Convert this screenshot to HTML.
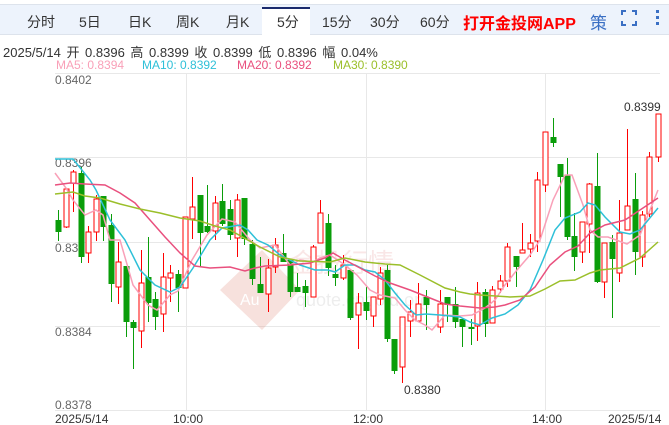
<!DOCTYPE html>
<html><head><meta charset="utf-8"><style>
body{margin:0;width:669px;height:425px;overflow:hidden;background:#fff;font-family:"Liberation Sans","Noto Sans CJK SC",sans-serif;}
.bar{position:absolute;left:0;top:4px;width:669px;height:31px;background:#edf3fc;border-top:1px solid #dde3ec;border-bottom:1px solid #dde3ec;box-sizing:border-box}
.t{position:absolute;top:12px;font-size:14px;color:#333}
.act{position:absolute;left:262px;top:7px;width:48px;height:29px;background:#fff;border-top:2px solid #1a2a6c;box-sizing:border-box}
.info{position:absolute;left:3px;top:42px;font-size:13px;color:#333;word-spacing:2px}
.ma{position:absolute;top:58px;font-size:12px}
</style></head><body>
<div class="bar"></div>
<div class="act"></div>
<span class="t" style="left:27px">分时</span>
<span class="t" style="left:79px">5日</span>
<span class="t" style="left:128px">日K</span>
<span class="t" style="left:176px">周K</span>
<span class="t" style="left:226px">月K</span>
<span class="t" style="left:277px">5分</span>
<span class="t" style="left:322px">15分</span>
<span class="t" style="left:370px">30分</span>
<span class="t" style="left:420px">60分</span>
<span class="t" style="left:463px;top:10px;font-size:16px;font-weight:bold;color:#f00">打开金投网APP</span>
<span class="t" style="left:590px;top:9px;font-size:17px;color:#3a6fc4">策</span>
<svg style="position:absolute;left:620px;top:9px" width="49" height="20"><g stroke="#3a6fc4" stroke-width="2" fill="none"><path d="M2 6V2H6M12 2H16V6M16 12V16H12M6 16H2V12"/></g><g fill="#3a6fc4"><rect x="36" y="1" width="3" height="3"/><rect x="36" y="7" width="3" height="3"/><rect x="36" y="13" width="3" height="3"/></g></svg>
<div class="info">2025/5/14 开 0.8396 高 0.8399 收 0.8399 低 0.8396 幅 0.04%</div>
<span class="ma" style="left:56px;color:#f9a0b8">MA5: 0.8394</span>
<span class="ma" style="left:142px;color:#2ec0d8">MA10: 0.8392</span>
<span class="ma" style="left:237px;color:#e9507e">MA20: 0.8392</span>
<span class="ma" style="left:333px;color:#9bbf2a">MA30: 0.8390</span>
<svg id="c" style="position:absolute;left:0;top:0" width="669" height="425" font-family="Liberation Sans, sans-serif">
<g stroke="#e8e8e8" stroke-width="1">
<line x1="55" y1="73.5" x2="660" y2="73.5"/><line x1="55" y1="157.5" x2="660" y2="157.5"/><line x1="55" y1="242.5" x2="660" y2="242.5"/><line x1="55" y1="326.5" x2="660" y2="326.5"/><line x1="55" y1="410.5" x2="660" y2="410.5"/>
<line x1="186.5" y1="73" x2="186.5" y2="411"/><line x1="366.5" y1="73" x2="366.5" y2="411"/><line x1="545.5" y1="73" x2="545.5" y2="411"/>
</g>
<g opacity="0.25"><path d="M220 290 L262 250 L300 290 L262 330Z" fill="#e08a7a"/><text x="240" y="305" font-size="16" fill="#fff">Au</text><text x="290" y="272" font-size="26" fill="#e9a0a0" font-family="Noto Sans CJK SC">金投行情</text><text x="296" y="306" font-size="18" fill="#bbb">quote.cngold.org</text></g>
<g font-size="12" fill="#666"><text x="55" y="84">0.8402</text><text x="55" y="167">0.8396</text><text x="55" y="252">0.839</text><text x="55" y="336">0.8384</text><text x="55" y="409">0.8378</text></g>
<g font-size="12" fill="#333"><text x="55" y="423">2025/5/14</text><text x="173" y="423">10:00</text><text x="353" y="423">12:00</text><text x="532" y="423">14:00</text><text x="608" y="423">2025/5/14</text><text x="624" y="111">0.8399</text><text x="404" y="394">0.8380</text></g>
<g id="k"></g><g id="m" fill="none" stroke-width="1.5"></g>
</svg>
<script>
var K=[[58,220,232,210,241,0],[66,189,227,188,228,1],[73,172,183,170,212,1],[81,173,257,167,263,0],[88,232,253,226,263,1],[96,199,232,195,241,1],[103,196,227,196,241,0],[111,225,284,214,302,0],[118,262,287,242,304,1],[126,266,322,266,337,0],[133,322,328,320,369,0],[141,283,331,250,348,1],[148,277,303,237,322,0],[155,299,317,292,330,0],[163,277,314,253,332,1],[170,273,278,265,302,1],[178,274,288,270,312,0],[185,217,288,217,288,1],[192,207,219,177,239,1],[200,195,233,195,266,0],[207,226,232,185,233,0],[215,203,231,196,240,1],[222,201,224,184,226,0],[230,209,235,200,240,0],[237,200,238,194,257,1],[244,198,239,198,245,0],[252,244,279,240,285,0],[260,284,293,257,293,0],[268,268,294,259,312,1],[275,245,267,238,273,1],[283,253,262,234,262,0],[290,260,292,260,297,0],[297,287,292,273,292,0],[305,286,293,280,307,0],[313,247,297,245,297,1],[320,213,243,200,243,1],[328,223,268,214,276,0],[335,274,278,265,286,0],[343,265,278,255,280,1],[350,270,318,270,320,0],[358,303,315,293,349,1],[366,302,311,287,320,0],[373,297,316,297,327,1],[380,273,299,267,305,1],[387,270,339,265,342,0],[394,339,371,339,374,0],[402,317,367,317,383,1],[410,312,321,300,337,1],[418,304,321,283,321,1],[426,297,305,290,330,0],[440,304,327,290,333,1],[447,297,305,297,322,0],[455,304,322,287,328,0],[462,319,327,319,347,0],[471,327,329,319,345,0],[477,293,326,282,341,1],[485,292,324,289,337,0],[492,290,323,286,323,1],[500,281,289,275,293,1],[507,247,281,243,287,1],[516,256,267,256,287,0],[522,250,253,223,253,1],[530,243,249,234,257,1],[537,180,241,172,252,1],[545,132,185,132,192,1],[553,137,143,118,147,0],[560,164,177,164,217,0],[567,175,237,158,240,0],[574,236,257,213,271,0],[582,222,252,222,263,1],[589,184,224,183,253,1],[597,186,282,153,283,0],[604,243,282,243,298,1],[612,242,259,235,318,0],[619,233,273,200,282,1],[627,206,230,129,230,1],[635,199,252,173,275,0],[642,215,257,211,267,1],[649,157,214,152,217,1],[658,114,157,114,162,1]];
var s='';K.forEach(function(c){var x=c[0],col=c[5]?'#f00':'#0a9d0a';s+='<line x1="'+(x+.5)+'" x2="'+(x+.5)+'" y1="'+c[3]+'" y2="'+c[4]+'" stroke="'+col+'"/>';
if(c[5])s+='<rect x="'+(x-2)+'" y="'+c[1]+'" width="5" height="'+Math.max(1,c[2]-c[1])+'" fill="#fff" stroke="#f00"/>';else s+='<rect x="'+(x-2.5)+'" y="'+c[1]+'" width="6" height="'+Math.max(2,c[2]-c[1])+'" fill="#0a9d0a"/>';});
document.getElementById('k').innerHTML=s;
var M=[['#f9a0b8','55,173 66,188 73,200 85,215 96,210 103,215 110,240 120,240 133,285 148,305 157,310 170,295 178,291 192,260 207,235 222,219 235,222 250,240 260,248 275,245 290,265 300,260 313,262 320,258 330,255 345,265 357,275 370,290 380,295 395,298 405,310 415,320 425,325 432,330 445,315 460,316 472,315 485,308 495,300 505,285 517,270 530,255 540,240 553,200 565,175 572,175 583,205 590,230 598,237 608,237 627,244 640,235 658,190'],
['#2ec0d8','55,159 73,159 90,180 96,190 110,220 125,240 140,270 155,285 170,292 180,287 193,268 210,240 222,228 240,225 248,230 257,240 268,245 280,255 300,265 315,270 328,270 335,272 345,265 355,265 365,270 375,272 385,280 395,293 405,305 416,315 426,314 440,315 460,317 470,322 480,325 492,318 505,314 518,305 530,290 543,260 555,230 565,218 580,212 588,203 595,205 605,217 620,232 630,234 640,230 658,208'],
['#e9507e','55,185 70,183 85,184 105,185 120,193 135,203 150,220 165,237 180,253 195,266 210,268 230,267 245,271 255,268 265,266 290,265 310,263 325,258 333,253 345,260 360,268 375,276 390,283 410,290 430,298 445,304 460,306 480,308 495,307 505,305 520,300 535,287 550,265 565,252 578,246 590,233 605,225 625,220 640,210 658,198'],
['#9bbf2a','55,194 73,192 85,196 100,198 120,204 140,209 160,213 180,218 200,221 215,226 230,230 260,247 280,257 300,261 330,262 345,258 365,262 385,264 400,265 420,275 445,288 460,292 470,294 480,295 510,297 530,296 545,289 560,281 575,280 590,273 600,270 620,268 640,258 658,242']];
var m='';M.forEach(function(a){m+='<polyline stroke="'+a[0]+'" points="'+a[1]+'"/>';});document.getElementById('m').innerHTML=m;
</script>
</body></html>
